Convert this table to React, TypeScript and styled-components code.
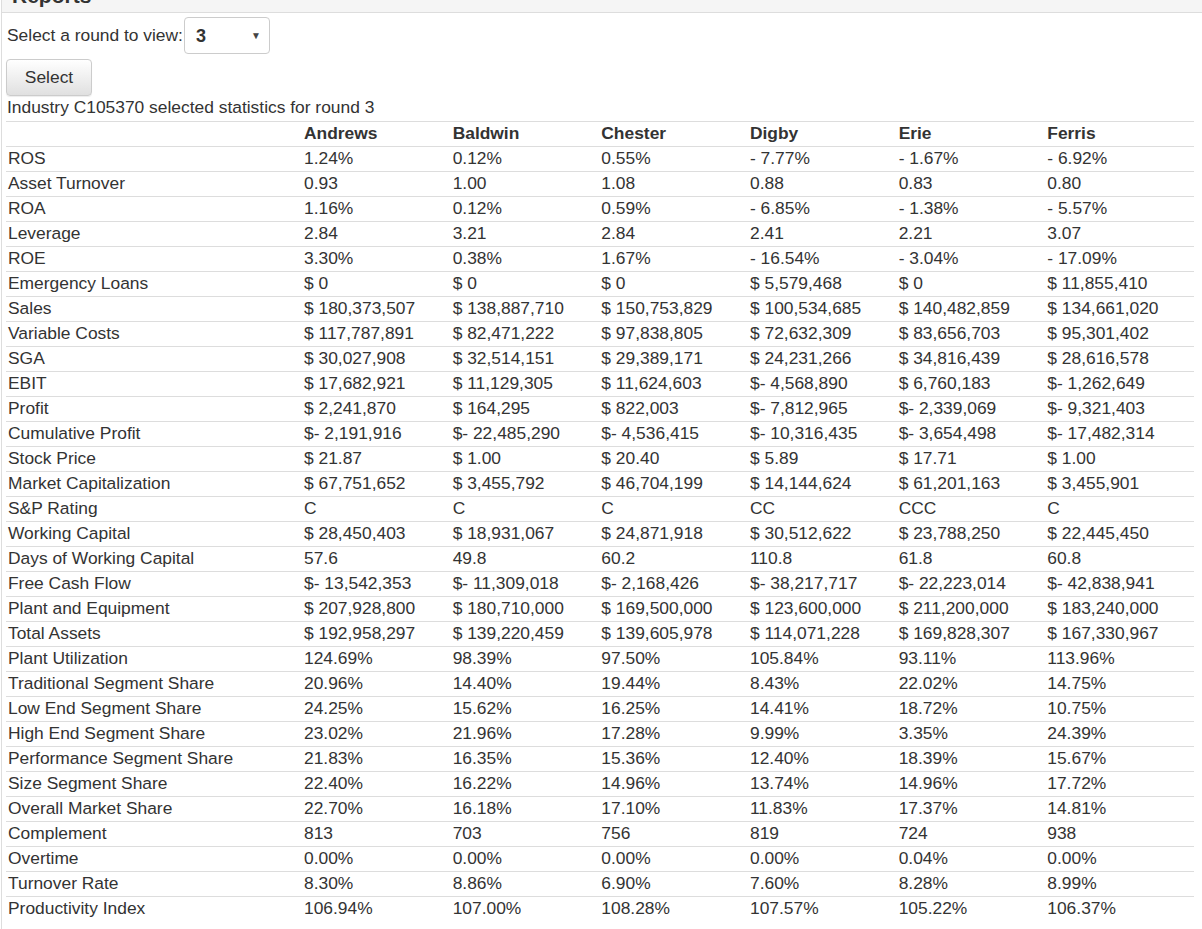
import React from "react";
import styled, { createGlobalStyle } from "styled-components";

const GlobalStyle = createGlobalStyle`
  html, body {
    margin: 0;
    padding: 0;
    background: #fff;
  }
  body {
    font-family: "Liberation Sans", Arial, sans-serif;
    font-size: 17.4px;
    color: #333;
    overflow: hidden;
  }
`;

const teams = ["Andrews", "Baldwin", "Chester", "Digby", "Erie", "Ferris"];

const rows: [string, string[]][] = [
  ["ROS", ["1.24%", "0.12%", "0.55%", "- 7.77%", "- 1.67%", "- 6.92%"]],
  ["Asset Turnover", ["0.93", "1.00", "1.08", "0.88", "0.83", "0.80"]],
  ["ROA", ["1.16%", "0.12%", "0.59%", "- 6.85%", "- 1.38%", "- 5.57%"]],
  ["Leverage", ["2.84", "3.21", "2.84", "2.41", "2.21", "3.07"]],
  ["ROE", ["3.30%", "0.38%", "1.67%", "- 16.54%", "- 3.04%", "- 17.09%"]],
  ["Emergency Loans", ["$ 0", "$ 0", "$ 0", "$ 5,579,468", "$ 0", "$ 11,855,410"]],
  ["Sales", ["$ 180,373,507", "$ 138,887,710", "$ 150,753,829", "$ 100,534,685", "$ 140,482,859", "$ 134,661,020"]],
  ["Variable Costs", ["$ 117,787,891", "$ 82,471,222", "$ 97,838,805", "$ 72,632,309", "$ 83,656,703", "$ 95,301,402"]],
  ["SGA", ["$ 30,027,908", "$ 32,514,151", "$ 29,389,171", "$ 24,231,266", "$ 34,816,439", "$ 28,616,578"]],
  ["EBIT", ["$ 17,682,921", "$ 11,129,305", "$ 11,624,603", "$- 4,568,890", "$ 6,760,183", "$- 1,262,649"]],
  ["Profit", ["$ 2,241,870", "$ 164,295", "$ 822,003", "$- 7,812,965", "$- 2,339,069", "$- 9,321,403"]],
  ["Cumulative Profit", ["$- 2,191,916", "$- 22,485,290", "$- 4,536,415", "$- 10,316,435", "$- 3,654,498", "$- 17,482,314"]],
  ["Stock Price", ["$ 21.87", "$ 1.00", "$ 20.40", "$ 5.89", "$ 17.71", "$ 1.00"]],
  ["Market Capitalization", ["$ 67,751,652", "$ 3,455,792", "$ 46,704,199", "$ 14,144,624", "$ 61,201,163", "$ 3,455,901"]],
  ["S&P Rating", ["C", "C", "C", "CC", "CCC", "C"]],
  ["Working Capital", ["$ 28,450,403", "$ 18,931,067", "$ 24,871,918", "$ 30,512,622", "$ 23,788,250", "$ 22,445,450"]],
  ["Days of Working Capital", ["57.6", "49.8", "60.2", "110.8", "61.8", "60.8"]],
  ["Free Cash Flow", ["$- 13,542,353", "$- 11,309,018", "$- 2,168,426", "$- 38,217,717", "$- 22,223,014", "$- 42,838,941"]],
  ["Plant and Equipment", ["$ 207,928,800", "$ 180,710,000", "$ 169,500,000", "$ 123,600,000", "$ 211,200,000", "$ 183,240,000"]],
  ["Total Assets", ["$ 192,958,297", "$ 139,220,459", "$ 139,605,978", "$ 114,071,228", "$ 169,828,307", "$ 167,330,967"]],
  ["Plant Utilization", ["124.69%", "98.39%", "97.50%", "105.84%", "93.11%", "113.96%"]],
  ["Traditional Segment Share", ["20.96%", "14.40%", "19.44%", "8.43%", "22.02%", "14.75%"]],
  ["Low End Segment Share", ["24.25%", "15.62%", "16.25%", "14.41%", "18.72%", "10.75%"]],
  ["High End Segment Share", ["23.02%", "21.96%", "17.28%", "9.99%", "3.35%", "24.39%"]],
  ["Performance Segment Share", ["21.83%", "16.35%", "15.36%", "12.40%", "18.39%", "15.67%"]],
  ["Size Segment Share", ["22.40%", "16.22%", "14.96%", "13.74%", "14.96%", "17.72%"]],
  ["Overall Market Share", ["22.70%", "16.18%", "17.10%", "11.83%", "17.37%", "14.81%"]],
  ["Complement", ["813", "703", "756", "819", "724", "938"]],
  ["Overtime", ["0.00%", "0.00%", "0.00%", "0.00%", "0.04%", "0.00%"]],
  ["Turnover Rate", ["8.30%", "8.86%", "6.90%", "7.60%", "8.28%", "8.99%"]],
  ["Productivity Index", ["106.94%", "107.00%", "108.28%", "107.57%", "105.22%", "106.37%"]],
];

// page is scrolled a little, so the panel heading is cut at the top
const Panel = styled.section`
  margin: -24px 0 0 1px;
  border: 1px solid #ddd;
  border-right: none;
  border-top: none;
`;

const PanelHeading = styled.header`
  background: #f5f5f5;
  border-bottom: 1px solid #ddd;
  padding: 10px 10px 6px;
  height: 20px;
  font-size: 21px;
  line-height: 20px;
  font-weight: bold;
  color: #333;
`;

const PanelBody = styled.div`
  padding: 4px 8px 8px 4px;
`;

const RoundForm = styled.form`
  display: flex;
  flex-direction: column;
  align-items: flex-start;
  gap: 5px;
`;

const RoundRow = styled.div`
  display: flex;
  align-items: center;
  gap: 1px;
`;

const FieldLabel = styled.label`
  padding-left: 1px;
`;

const SelectWrap = styled.div`
  position: relative;
  width: 86px;
  height: 37px;
`;

const RoundSelect = styled.select`
  appearance: none;
  width: 100%;
  height: 100%;
  box-sizing: border-box;
  border: 1px solid #ccc;
  border-radius: 4px;
  background: #fff;
  padding: 0 0 0 11px;
  font-family: "Liberation Sans", Arial, sans-serif;
  font-size: 18px;
  font-weight: bold;
  color: #333;
`;

const Caret = styled.span`
  position: absolute;
  right: 9px;
  top: 13px;
  font-size: 10px;
  color: #444;
  pointer-events: none;
`;

const SelectButton = styled.button`
  width: 86px;
  height: 37px;
  border: 1px solid #ccc;
  border-radius: 4px;
  background: linear-gradient(to bottom, #fff 0%, #e0e0e0 100%);
  box-shadow: inset 0 1px 0 rgba(255, 255, 255, 0.15), 0 1px 1px rgba(0, 0, 0, 0.075);
  font-family: "Liberation Sans", Arial, sans-serif;
  font-size: 17.4px;
  color: #333;
  padding: 0;
`;

const Caption = styled.div`
  line-height: 22px;
  padding-left: 1px;
  margin: 0 0 3px;
`;

const StatsTable = styled.table`
  width: 1188px;
  border-collapse: collapse;
  table-layout: fixed;
  font-size: 17.4px;
`;

const Row = styled.tr`
  border-top: 1px solid #ddd;
`;

const Cell = styled.td<{ $head?: boolean }>`
  padding: 0 2px 1px;
  height: 23px;
  line-height: 23px;
  white-space: nowrap;
  text-align: left;
  font-weight: ${(p) => (p.$head ? "bold" : "normal")};
  vertical-align: middle;
`;

const LabelCol = styled.col`
  width: 296px;
`;

export default function App() {
  return (
    <>
      <GlobalStyle />
      <Panel>
        <PanelHeading>Reports</PanelHeading>
        <PanelBody>
          <RoundForm onSubmit={(e) => e.preventDefault()}>
            <RoundRow>
              <FieldLabel htmlFor="round">Select a round to view:</FieldLabel>
              <SelectWrap>
                <RoundSelect id="round" defaultValue="3">
                  <option value="1">1</option>
                  <option value="2">2</option>
                  <option value="3">3</option>
                </RoundSelect>
                <Caret>▼</Caret>
              </SelectWrap>
            </RoundRow>
            <SelectButton type="submit">Select</SelectButton>
          </RoundForm>
          <Caption>Industry C105370 selected statistics for round 3</Caption>
          <StatsTable>
            <colgroup>
              <LabelCol />
              {teams.map((t) => (
                <col key={t} />
              ))}
            </colgroup>
            <thead>
              <Row>
                <Cell as="th" />
                {teams.map((t) => (
                  <Cell as="th" $head key={t}>
                    {t}
                  </Cell>
                ))}
              </Row>
            </thead>
            <tbody>
              {rows.map(([label, values]) => (
                <Row key={label}>
                  <Cell>{label}</Cell>
                  {values.map((v, i) => (
                    <Cell key={i}>{v}</Cell>
                  ))}
                </Row>
              ))}
            </tbody>
          </StatsTable>
        </PanelBody>
      </Panel>
    </>
  );
}
